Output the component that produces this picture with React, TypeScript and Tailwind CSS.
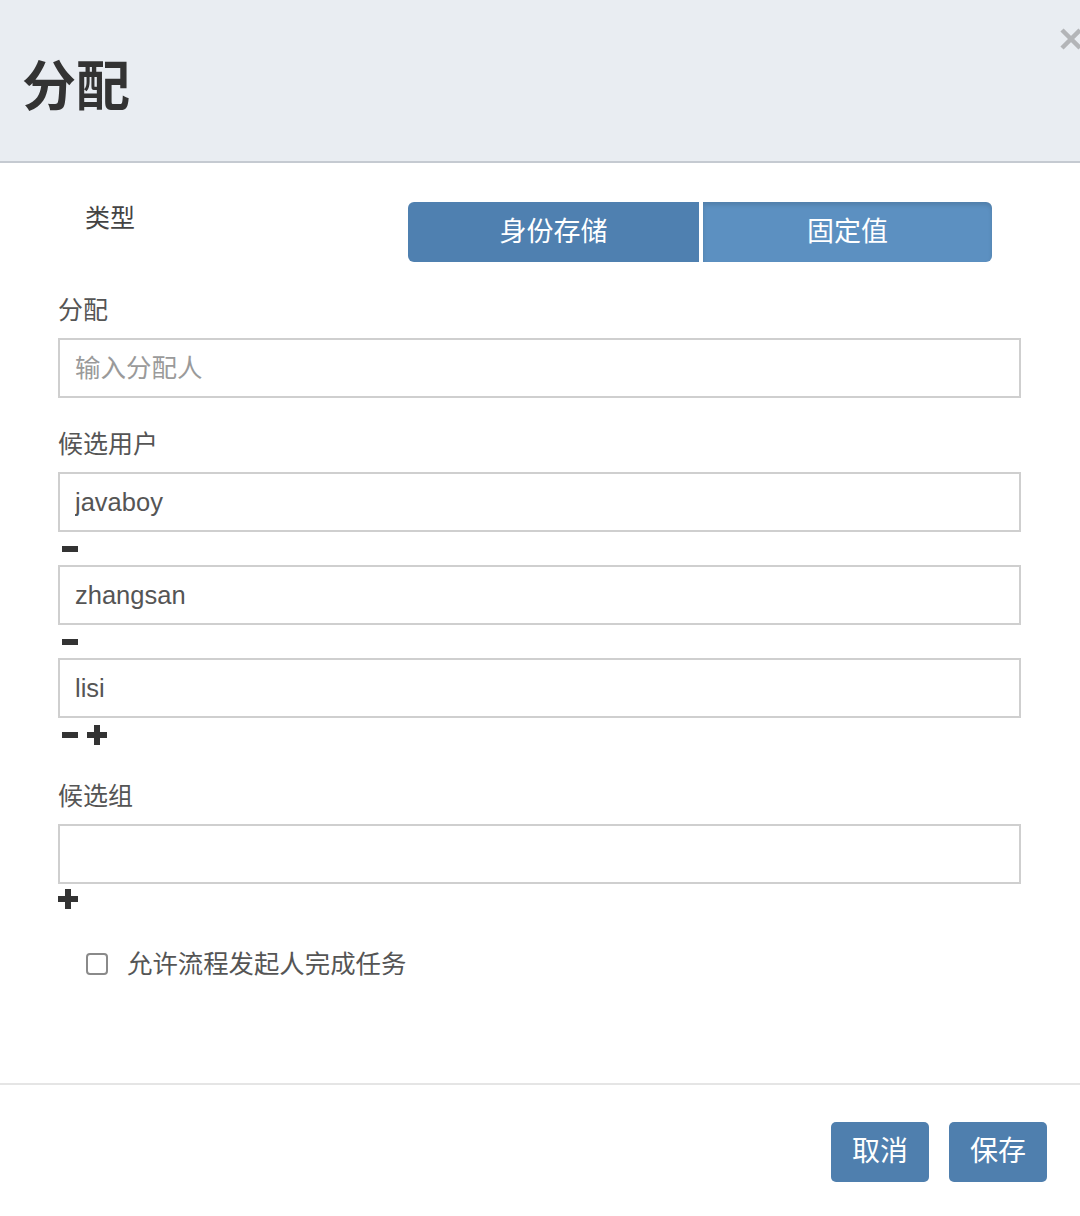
import React from "react";

const FONT = {
  fontFamily: '"Liberation Sans", "Noto Sans CJK SC", sans-serif',
};

function Minus() {
  return <span className="ml-[4px] block h-[6px] w-[16px] bg-[#333]" />;
}

function Plus({ className = "" }: { className?: string }) {
  return (
    <svg width="20" height="20" viewBox="0 0 20 20" className={className}>
      <rect x="0" y="7" width="20" height="6" fill="#333" />
      <rect x="7" y="0" width="6" height="20" fill="#333" />
    </svg>
  );
}

function Label({ children }: { children: React.ReactNode }) {
  return <div className="h-[36px] text-[25px] leading-[36px] text-[#555]">{children}</div>;
}

function Field({ value, placeholder }: { value?: string; placeholder?: string }) {
  return (
    <input
      readOnly
      value={value ?? ""}
      placeholder={placeholder}
      className="mt-[10px] block h-[60px] w-full border-2 border-[#cfcfcf] bg-white px-[15px] text-[25.5px] text-[#555] outline-none placeholder:text-[#9a9a9a]"
      style={FONT}
    />
  );
}

export default function App() {
  const users = ["javaboy", "zhangsan", "lisi"];

  return (
    <div className="relative flex h-[1216px] w-[1080px] flex-col overflow-hidden bg-white" style={FONT}>
      {/* header */}
      <div className="relative flex h-[163px] shrink-0 items-center border-b-2 border-[#c5cad1] bg-[#e9edf2] pl-[22px]">
        <h1 className="pt-[12px] text-[54px] font-bold leading-none text-[#333]">分配</h1>
        <svg width="26" height="26" viewBox="0 0 26 26" className="absolute left-[1058px] top-[26px]">
          <path d="M4 4 L22 22 M22 4 L4 22" stroke="#b3b5b8" strokeWidth="4.5" />
        </svg>
      </div>

      {/* body */}
      <div className="flex-1 pl-[58px] pr-[59px] pt-[39px]">
        <div className="flex items-start">
          <div className="w-[350px] pl-[27px] text-[25px] leading-[32px] text-[#444]">类型</div>
          <div className="flex">
            <button className="h-[60px] w-[291px] rounded-l-[6px] bg-[#4f80b0] text-[27px] text-white">
              身份存储
            </button>
            <button className="ml-[4px] h-[60px] w-[289px] rounded-r-[6px] bg-[#5c90c1] text-[27px] text-white shadow-[inset_0_3px_4px_rgba(0,0,0,0.12)]">
              固定值
            </button>
          </div>
        </div>

        <div className="mt-[30px]">
          <Label>分配</Label>
          <Field placeholder="输入分配人" />
        </div>

        <div className="mt-[28px]">
          <Label>候选用户</Label>
          {users.map((u, i) => (
            <div key={u} className={i === 0 ? "" : "-mt-[10px]"}>
              <Field value={u} />
              <div className="flex h-[33px] items-center">
                <Minus />
                {i === users.length - 1 && <Plus className="ml-[9px]" />}
              </div>
            </div>
          ))}
        </div>

        <div className="mt-[27px]">
          <Label>候选组</Label>
          <Field />
          <div className="flex h-[30px] items-center">
            <Plus />
          </div>
        </div>

        <label className="mt-[32px] flex h-[36px] items-center pl-[28px]">
          <span className="block h-[22px] w-[22px] rounded-[4px] border-2 border-[#8a8a8a] bg-white" />
          <span className="ml-[19px] text-[25.4px] text-[#555]">允许流程发起人完成任务</span>
        </label>
      </div>

      {/* footer */}
      <div className="flex h-[133px] shrink-0 items-start justify-end gap-[20px] border-t-2 border-[#e5e5e5] pr-[33px] pt-[37px]">
        <button className="h-[60px] w-[98px] rounded-[5px] bg-[#4f7fae] text-[28px] text-white">取消</button>
        <button className="h-[60px] w-[98px] rounded-[5px] bg-[#4f7fae] text-[28px] text-white">保存</button>
      </div>
    </div>
  );
}
